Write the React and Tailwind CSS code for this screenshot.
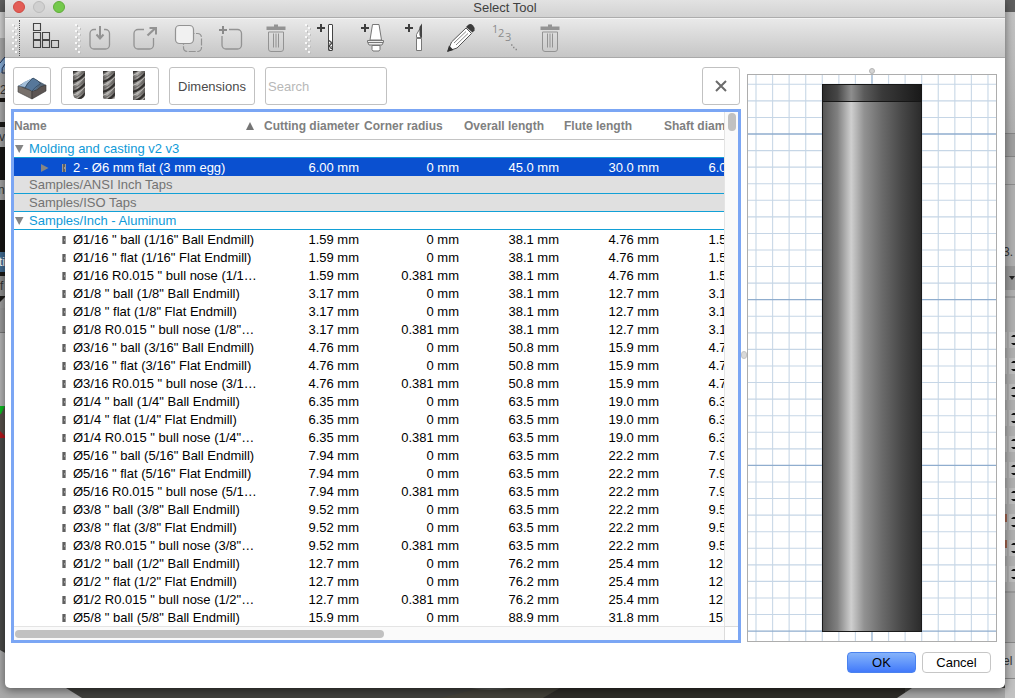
import React from 'react';

const columns = [
  'Cutting diameter',
  'Corner radius',
  'Overall length',
  'Flute length',
  'Shaft diameter',
];

const tools = [
  ['Ø1/16 " ball (1/16" Ball Endmill)', '1.59 mm', '0 mm', '38.1 mm', '4.76 mm', '1.59 mm'],
  ['Ø1/16 " flat (1/16" Flat Endmill)', '1.59 mm', '0 mm', '38.1 mm', '4.76 mm', '1.59 mm'],
  ['Ø1/16 R0.015 " bull nose (1/1…', '1.59 mm', '0.381 mm', '38.1 mm', '4.76 mm', '1.59 mm'],
  ['Ø1/8 " ball (1/8" Ball Endmill)', '3.17 mm', '0 mm', '38.1 mm', '12.7 mm', '3.17 mm'],
  ['Ø1/8 " flat (1/8" Flat Endmill)', '3.17 mm', '0 mm', '38.1 mm', '12.7 mm', '3.17 mm'],
  ['Ø1/8 R0.015 " bull nose (1/8"…', '3.17 mm', '0.381 mm', '38.1 mm', '12.7 mm', '3.17 mm'],
  ['Ø3/16 " ball (3/16" Ball Endmill)', '4.76 mm', '0 mm', '50.8 mm', '15.9 mm', '4.76 mm'],
  ['Ø3/16 " flat (3/16" Flat Endmill)', '4.76 mm', '0 mm', '50.8 mm', '15.9 mm', '4.76 mm'],
  ['Ø3/16 R0.015 " bull nose (3/1…', '4.76 mm', '0.381 mm', '50.8 mm', '15.9 mm', '4.76 mm'],
  ['Ø1/4 " ball (1/4" Ball Endmill)', '6.35 mm', '0 mm', '63.5 mm', '19.0 mm', '6.35 mm'],
  ['Ø1/4 " flat (1/4" Flat Endmill)', '6.35 mm', '0 mm', '63.5 mm', '19.0 mm', '6.35 mm'],
  ['Ø1/4 R0.015 " bull nose (1/4"…', '6.35 mm', '0.381 mm', '63.5 mm', '19.0 mm', '6.35 mm'],
  ['Ø5/16 " ball (5/16" Ball Endmill)', '7.94 mm', '0 mm', '63.5 mm', '22.2 mm', '7.94 mm'],
  ['Ø5/16 " flat (5/16" Flat Endmill)', '7.94 mm', '0 mm', '63.5 mm', '22.2 mm', '7.94 mm'],
  ['Ø5/16 R0.015 " bull nose (5/1…', '7.94 mm', '0.381 mm', '63.5 mm', '22.2 mm', '7.94 mm'],
  ['Ø3/8 " ball (3/8" Ball Endmill)', '9.52 mm', '0 mm', '63.5 mm', '22.2 mm', '9.52 mm'],
  ['Ø3/8 " flat (3/8" Flat Endmill)', '9.52 mm', '0 mm', '63.5 mm', '22.2 mm', '9.52 mm'],
  ['Ø3/8 R0.015 " bull nose (3/8"…', '9.52 mm', '0.381 mm', '63.5 mm', '22.2 mm', '9.52 mm'],
  ['Ø1/2 " ball (1/2" Ball Endmill)', '12.7 mm', '0 mm', '76.2 mm', '25.4 mm', '12.7 mm'],
  ['Ø1/2 " flat (1/2" Flat Endmill)', '12.7 mm', '0 mm', '76.2 mm', '25.4 mm', '12.7 mm'],
  ['Ø1/2 R0.015 " bull nose (1/2"…', '12.7 mm', '0.381 mm', '76.2 mm', '25.4 mm', '12.7 mm'],
  ['Ø5/8 " ball (5/8" Ball Endmill)', '15.9 mm', '0 mm', '88.9 mm', '31.8 mm', '15.9 mm'],
];

// Toolbar

const DragHandle = () => (
  <svg className="h-8 w-2 shrink-0" viewBox="0 0 8 32">
    {[2, 8, 14, 20, 26].map((y) => (
      <g key={y}>
        <rect x="1" y={y} width="2" height="2" fill="#f8f8f8" />
        <rect x="3" y={y + 1} width="1" height="2" fill="#c0c0c0" />
        <rect x="4" y={y + 3} width="2" height="2" fill="#f8f8f8" />
        <rect x="6" y={y + 4} width="1" height="2" fill="#c0c0c0" />
      </g>
    ))}
  </svg>
);

const ToolButton = ({ label, children }) => (
  <button type="button" aria-label={label} title={label} className="h-8 w-8 shrink-0">
    <svg className="h-8 w-8" viewBox="0 0 32 32" fill="none">
      {children}
    </svg>
  </button>
);

const Plus = ({ x, y, color }) => (
  <path d={`M${x - 4} ${y}h8M${x} ${y - 4}v8`} stroke={color} strokeWidth="2" />
);

const TrashShape = () => (
  <>
    <path d="M14 2.5h4v2h7.5V8h-19V4.5H14z" fill="#939393" />
    <path d="M8.5 10v17a2.500 2.500 0 0 0 2.500 2.500h10a2.500 2.500 0 0 0 2.500-2.500V10z" stroke="#939393" />
    <path d="M13.5 11.5v14M16 11.5v14M18.500 11.5v14" stroke="#939393" />
  </>
);

const Toolbar = () => (
  <div
    className="flex h-10 items-center border-t border-b border-t-[#f4f4f4] border-b-[#a9a9a9] bg-linear-to-b from-[#e9e9e9] to-[#c6c6c6] pl-1.5"
    role="toolbar"
  >
    <DragHandle />
    <div className="h-9 border-l border-dotted border-[#555]" />
    <div className="pl-2.5">
      <ToolButton label="Library view">
        <path
          d="M3.500 4.500h7v7h-7zM3.500 13.500h7v7h-7zM12.500 13.500h7v7h-7zM3.500 21.500h7v7h-7zM12.500 21.500h7v7h-7zM21.500 21.500h7v7h-7z"
          stroke="#444"
          strokeWidth="1.1"
        />
      </ToolButton>
    </div>
    <div className="flex items-center pl-3">
      <DragHandle />
      <div className="flex gap-3 pl-0.5">
        <ToolButton label="Import">
          <path d="M12 7.5h-2a4 4 0 0 0-4 4V23a4 4 0 0 0 4 4h11.500a4 4 0 0 0 4-4V11.500a4 4 0 0 0-4-4H20" stroke="#939393" strokeWidth="1.3" />
          <path d="M16 4v12" stroke="#939393" strokeWidth="2" />
          <path d="M12.500 12.500l3.500 4 3.500-4" stroke="#939393" strokeWidth="2" />
        </ToolButton>
        <ToolButton label="Export">
          <path d="M16 7.5h-6a4 4 0 0 0-4 4V23a4 4 0 0 0 4 4h11.500a4 4 0 0 0 4-4v-7" stroke="#939393" strokeWidth="1.3" />
          <path d="M19.500 13.500l8-7.500" stroke="#939393" strokeWidth="2.2" />
          <path d="M21.500 6H28v6.500" stroke="#939393" strokeWidth="2" />
        </ToolButton>
        <ToolButton label="Copy">
          <rect x="11.500" y="11.500" width="18" height="18" rx="4" stroke="#939393" strokeWidth="1.2" strokeDasharray="7 1.5" />
          <rect x="3.500" y="3.500" width="18" height="18" rx="4" fill="#f1f1f1" stroke="#939393" strokeWidth="1.2" />
        </ToolButton>
        <ToolButton label="New library">
          <path d="M13 7.5h8.500a4 4 0 0 1 4 4V23a4 4 0 0 1-4 4H10a4 4 0 0 1-4-4v-9" stroke="#939393" strokeWidth="1.3" />
          <Plus x={7} y={8} color="#8a8a8a" />
        </ToolButton>
        <ToolButton label="Delete library">
          <TrashShape />
        </ToolButton>
      </div>
    </div>
    <div className="flex items-center pl-3">
      <DragHandle />
      <div className="flex gap-3 pl-0.5">
        <ToolButton label="New mill">
          <Plus x={7} y={6} color="#3f3f3f" />
          <rect x="14.500" y="2.500" width="4" height="26" rx=".5" fill="#fff" stroke="#444" />
          <path d="M15 18.500l3 2.500-3 3 3 3" stroke="#444" strokeWidth="1.3" />
          <path d="M15 22.500l3-3M15 28l3-4" stroke="#777" />
        </ToolButton>
        <ToolButton label="New holder">
          <Plus x={7} y={6} color="#3f3f3f" />
          <path d="M14.500 2.500H21l2.500 15.500H12z" fill="#fff" stroke="#777" />
          <path d="M14 23.500h8v4L21 29h-6l-1-1.500z" fill="#fff" stroke="#777" />
          <path d="M9.500 18.500h16V20L24 23H11l-1.500-3z" fill="#ececec" stroke="#777" />
          <path d="M10 20.500h15" stroke="#777" />
        </ToolButton>
        <ToolButton label="New turning tool">
          <Plus x={7} y={6} color="#3f3f3f" />
          <path d="M14.500 16.500h5v12h-5z" fill="#fff" stroke="#777" />
          <path d="M14.500 15.500v-3l3.500-6 1.500 9z" fill="#fff" stroke="#777" />
          <path d="M17.500 13V5L20 1.500v14h-1.500z" fill="#444" />
        </ToolButton>
        <ToolButton label="Edit tool">
          <path d="M2 29l3.500-9L20 6l5.500 5.500L11 26z" fill="#fff" stroke="#555" />
          <path d="M1 30l2-6.500L7.500 28z" fill="#333" />
          <path d="M8 21L20 9.500M10 23l12-11.500" stroke="#888" />
          <path d="M22 3q2.500-2 5 .5t1.500 5l-2 2L20 5z" fill="#3c3c3c" />
        </ToolButton>
        <ToolButton label="Renumber">
          <g fill="#8b8b8b" className="font-['Open_Sans',sans-serif] text-[11px]">
            <text x="2" y="11">1</text>
            <text x="8" y="15">2</text>
            <text x="15" y="19">3</text>
          </g>
          <path d="M21 23h1.500M23 25.500h1.500M25.500 27.500H27" stroke="#8b8b8b" strokeWidth="1.5" />
        </ToolButton>
        <ToolButton label="Delete tool">
          <TrashShape />
        </ToolButton>
      </div>
    </div>
  </div>
);

// Filter row

const StockIcon = () => (
  <svg className="h-6 w-8" viewBox="0 0 32 24">
    <path d="M2 10l7-4 8-4 13 7-14 8z" fill="#56687a" />
    <path d="M2 10q3 0 6 2l8 3v8L2 16z" fill="#77706b" stroke="#3c3c3c" strokeWidth=".6" />
    <path d="M16 15l5-1q3-4 9-5v6l-14 8z" fill="#5c5553" stroke="#333" strokeWidth=".6" />
    <path d="M2 10q3 0 5-2.500L17 2q5 2 7 6-2 2-4 5-2 2-4 2-4-4-14-5z" fill="#56779a" />
    <path d="M2 10q4-1 6-4l9-4q-6 5-8 9-3-1-7-1z" fill="#a1bdd8" />
    <path d="M17 2q-6 5-8 10M17 2q5 2 8 6M16 15q3-4 8-7" stroke="#2f4356" strokeWidth=".7" fill="none" />
  </svg>
);

const tips = {
  ball: 'M1 0h12v22q0 6-6 6t-6-6z',
  bull: 'M1 0h12v26q0 2-2 2H3q-2 0-2-2z',
  flat: 'M1 0h12v29H1z',
};

const MillIcon = ({ tip }) => (
  <svg className="h-[30px] w-3.5" viewBox="0 0 14 30">
    <defs>
      <linearGradient id={`steel-${tip}`}>
        <stop offset="0" stopColor="#4a4846" />
        <stop offset=".4" stopColor="#a9a7a4" />
        <stop offset="1" stopColor="#55524f" />
      </linearGradient>
      <clipPath id={`tip-${tip}`}>
        <path d={tips[tip]} />
      </clipPath>
    </defs>
    <g clipPath={`url(#tip-${tip})`}>
      <rect width="14" height="30" fill={`url(#steel-${tip})`} />
      {[0, 10, 20, 30, 40].map((y) => (
        <g key={y}>
          <path d={`M0 ${y}q8-2 14-10v3q-6 8-14 9z`} fill="#33312f" />
          <path d={`M0 ${y + 4}q8-2 14-10v1q-6 8-14 10z`} fill="#c8c6c3" />
          <path d={`M0 ${y + 7}q8-2 14-10v1q-6 8-14 10z`} fill="#65625f" />
        </g>
      ))}
    </g>
  </svg>
);

const boxClass = 'flex h-[38px] items-center rounded-[3px] border border-[#c1c1c1] bg-white';

const FilterRow = () => (
  <div className="flex gap-2.5 pr-px pb-1 pl-0.5">
    <button type="button" aria-label="Operation type" className={`${boxClass} w-[38px] justify-center pt-1`}>
      <StockIcon />
    </button>
    <div role="group" aria-label="Tool type" className={`${boxClass} w-[98px] justify-between pr-3 pl-2.5`}>
      <button type="button" aria-label="Ball end mill"><MillIcon tip="ball" /></button>
      <button type="button" aria-label="Bull nose end mill"><MillIcon tip="bull" /></button>
      <button type="button" aria-label="Flat end mill"><MillIcon tip="flat" /></button>
    </div>
    <button type="button" className={`${boxClass} w-[86px] justify-center pt-px text-[13px] text-[#4a4a4a]`}>
      Dimensions
    </button>
    <input
      type="search"
      aria-label="Search"
      placeholder="Search"
      className={`${boxClass} w-[122px] px-0.5 text-[13px] placeholder:text-[#b8b8b8]`}
    />
    <button type="button" aria-label="Clear filters" className={`${boxClass} ml-auto w-[38px] justify-center`}>
      <svg className="h-3 w-3" viewBox="0 0 12 12" stroke="#6b6b6b" strokeWidth="2">
        <path d="M1 1l10 10M11 1L1 11" />
      </svg>
    </button>
  </div>
);

// Tool table

const Disclosure = ({ open }) => (
  <svg className="h-2 w-2.5" viewBox="0 0 10 8" fill="#858585">
    <path d={open ? 'M1 0h8.500L5.200 8z' : 'M1 0v8l7.500-4z'} />
  </svg>
);

const TinyMill = () => (
  <svg className="h-2 w-1" viewBox="0 0 4 8">
    <rect width="4" height="8" fill="#9a9a9a" />
    <path d="M1 0h2v3H2v2h1v3H1z" fill="#606060" />
  </svg>
);

const GroupRow = ({ name, open }) => (
  <tr className={open ? 'text-[#0f9ad8]' : 'bg-[#e0e0e0] text-[#737373]'}>
    <td colSpan={6} className="h-[18px] border-b border-[#12a0d6] p-0">
      <div className="flex h-[17px] items-center">
        <span className="flex w-[15px] shrink-0">{open && <Disclosure open />}</span>
        {name}
      </div>
    </td>
  </tr>
);

const ToolRow = ({ tool, selected }) => (
  <tr className={selected ? 'bg-[#0a50d0] leading-4 text-white' : 'leading-4 text-black'} aria-selected={selected}>
    <td className="h-[18px] p-0 pt-0.5">
      <div className="flex h-4 items-center">
        <span className="flex w-12 shrink-0 pl-[26px]">{selected && <Disclosure />}</span>
        <span className="flex w-[11px] shrink-0"><TinyMill /></span>
        {tool[0]}
      </div>
    </td>
    {tool.slice(1).map((value, i) => (
      <td key={i} className="h-[18px] p-0 pt-0.5 pr-1 text-right">{value}</td>
    ))}
  </tr>
);

const ToolTable = () => (
  <div className="border-3 border-[#7ba6f4] bg-white">
    <div className="flex">
      <div className="min-w-0 flex-1 overflow-hidden">
        <table className="w-[749px] table-fixed border-separate border-spacing-0 text-[13px] leading-[18px] whitespace-nowrap">
          <colgroup>
            <col className="w-[249px]" />
            {columns.map((name) => <col key={name} className="w-[100px]" />)}
          </colgroup>
          <thead>
            <tr className="text-left text-[12px] text-[#808080]">
              <th className="h-7 border-b border-[#c4c4c4] p-0">
                <div className="flex items-center justify-between pr-2">
                  Name
                  <svg className="h-2 w-2.5" viewBox="0 0 10 8" fill="#757575">
                    <path d="M5 0l4 8H1z" />
                  </svg>
                </div>
              </th>
              {columns.map((name) => (
                <th key={name} className="h-7 border-b border-[#c4c4c4] p-0 pl-px">{name}</th>
              ))}
            </tr>
          </thead>
          <tbody>
            <GroupRow name="Molding and casting v2 v3" open />
            <ToolRow
              selected
              tool={['2 - Ø6 mm flat (3 mm egg)', '6.00 mm', '0 mm', '45.0 mm', '30.0 mm', '6.00 mm']}
            />
            <GroupRow name="Samples/ANSI Inch Taps" />
            <GroupRow name="Samples/ISO Taps" />
            <GroupRow name="Samples/Inch - Aluminum" open />
            {tools.map((tool) => <ToolRow key={tool[0]} tool={tool} />)}
          </tbody>
        </table>
      </div>
      <div className="w-3.5 shrink-0 border-l border-[#e4e4e4] bg-[#fafafa] pt-px pl-[3px]">
        <div className="h-[18px] w-2 rounded-full bg-[#c1c1c1]" />
      </div>
    </div>
    <div className="flex h-3.5">
      <div className="flex-1 border-t border-[#e4e4e4] bg-[#fafafa] pt-[3px] pl-px">
        <div className="h-2 w-[52%] rounded-full bg-[#c1c1c1]" />
      </div>
      <div className="w-3.5 border-t border-l border-[#dcdcdc] bg-white" />
    </div>
  </div>
);

// Tool preview

const STEP = 16.57;

const ToolPreview = () => (
  <svg className="block w-full border border-[#adadad]" viewBox="0 0 248 566" role="img" aria-label="Tool preview">
    <defs>
      <linearGradient id="shaft">
        <stop offset="0" stopColor="#565656" />
        <stop offset=".15" stopColor="#808080" />
        <stop offset=".29" stopColor="#cfcfcf" />
        <stop offset=".42" stopColor="#929292" />
        <stop offset=".6" stopColor="#6b6b6b" />
        <stop offset=".8" stopColor="#484848" />
        <stop offset="1" stopColor="#2b2b2b" />
      </linearGradient>
      <linearGradient id="cap">
        <stop offset="0" stopColor="#2d2d2d" />
        <stop offset=".15" stopColor="#464646" />
        <stop offset=".29" stopColor="#8e8e8e" />
        <stop offset=".42" stopColor="#5b5b5b" />
        <stop offset=".6" stopColor="#3a3a3a" />
        <stop offset="1" stopColor="#191919" />
      </linearGradient>
    </defs>
    <rect width="248" height="566" fill="#fff" />
    {Array.from({ length: 15 }, (_, i) => (
      <path key={i} d={`M${8 + i * STEP} 0v566`} stroke={i === 7 ? '#a9c0d8' : '#ccdae8'} strokeWidth={i === 7 ? 1.6 : 1.2} />
    ))}
    {Array.from({ length: 34 }, (_, i) => (
      <path key={i} d={`M0 ${9.3 + i * STEP}h248`} stroke={i % 10 === 3 ? '#8fadce' : '#c6d6e6'} strokeWidth={i % 10 === 3 ? 1.3 : 1.1} />
    ))}
    <rect x="74.500" y="9.500" width="99" height="547" fill="url(#shaft)" stroke="#1a1a1a" />
    <rect x="74.500" y="9.500" width="99" height="17" fill="url(#cap)" stroke="#161616" />
  </svg>
);

// Application window behind the dialog

const Spinner = ({ mark }) => (
  <div className="flex h-[26px] items-center justify-between">
    <span className="h-4 w-0.5 bg-[#c6c6c6]">
      {mark && <span className="block h-2 w-0.5 bg-[#a5654f]" />}
    </span>
    <svg className="h-4 w-1.5" viewBox="0 0 6 16" fill="#111">
      <rect width="6" height="16" fill="#bebebe" />
      <path d="M2 5h4V3H4zM2 11h4v2H4z" />
    </svg>
  </div>
);

const Backdrop = () => (
  <div className="col-start-1 row-start-1 flex min-w-0 text-[12px] leading-5 text-[#333]" aria-hidden="true">
    <div className="flex min-w-0 flex-1 flex-col">
      <div className="flex w-[5px] flex-1 flex-col overflow-hidden bg-[#4b4b48]">
        <div className="h-3 bg-[#5f5f5f]" />
        <div className="h-[26px] bg-[#cfcfcf]" />
        <div className="h-[42px] bg-[#a8a8a8]">
          <svg className="h-10 w-[5px]" viewBox="0 0 5 40">
            <path d="M5 19q-5 3-5 8v8l5-4z" fill="#86acd6" />
            <path d="M5 19L0 25M5 26q-4 4-3 9h3" stroke="#1d2f55" fill="none" />
          </svg>
        </div>
        <div className="h-[18px] bg-[#a8a8a8]">2</div>
        <div className="h-1 bg-[#181614]" />
        <div className="h-5 bg-[#a9a9a9]" />
        <div className="h-[5px] bg-[#1c1a18]" />
        <div className="h-5 bg-[#a2a2a2] indent-[-1px]">v</div>
        <div className="h-[33px] bg-[#171513]" />
        <div className="h-5 bg-[#a2a2a2] indent-[-2px]">n</div>
        <div className="h-[52px] bg-[#171513]" />
        <div className="h-5 bg-[#426c92] indent-[-1px] text-white">ti</div>
        <div className="h-1 bg-[#1c1a18]" />
        <div className="h-5 bg-[#8f8f8f]">f</div>
        <svg className="h-3 w-[5px]" viewBox="0 0 5 12">
          <rect width="5" height="12" fill="#a0a0a0" />
          <path d="M0 0h5v1L0 6z" fill="#1c1a18" />
        </svg>
        <div className="h-6 bg-[#9a9a9a]" />
        <div className="h-[74px] border-t border-[#777] bg-[#b4b4b4]" />
        <svg className="h-8 w-[5px]" viewBox="0 0 5 32">
          <rect width="5" height="32" fill="#57504a" />
          <path d="M0 0h5L1 8H0z" fill="#0bbd1f" />
          <path d="M0 25l5 5v2H0z" fill="#b3161b" />
        </svg>
      </div>
      <svg className="block h-12 w-full" viewBox="0 0 1005 48" preserveAspectRatio="none">
        <rect width="1005" height="48" fill="#3f3f3c" />
        <path d="M440 48l40-10h80l-17 10z" fill="#434139" />
        <path d="M560 38h345v10H543z" fill="#2e2c29" />
        <path d="M471 38h38q-19 4-38 0z" fill="#575856" />
        <path d="M0 0l66 38 16 10H0z" fill="#a9a9a9" />
        <path d="M912 38h93v10H897z" fill="#a6a6a6" />
      </svg>
    </div>
    <div className="flex w-2.5 flex-col overflow-hidden bg-[#b0b0b0]">
      <div className="h-3 bg-[#5f5f5f]" />
      <div className="h-[121px] bg-linear-to-b from-[#c4c4c4] to-[#b0b0b0]" />
      <div className="h-6 border-t border-b border-[#868686] bg-[#a0a0a0]" />
      <div className="h-7 border-b border-[#8e8e8e] bg-[#b0b0b0]" />
      <div className="h-[81px] bg-[#b0b0b0] pt-[57px] indent-[-2px]">3.</div>
      <div className="flex h-6 items-center bg-[#9a9a9a] pl-1">
        <svg className="h-1 w-1.5" viewBox="0 0 6 4" fill="#222"><path d="M0 0h6L3 4z" /></svg>
      </div>
      <div className="h-[37px]">
        <div className="h-2 border-b-2 border-[#999]" />
      </div>
      {Array.from({ length: 10 }, (_, i) => <Spinner key={i} mark={i === 7 || i === 8} />)}
      <div className="h-1.5 border-b-2 border-[#999]" />
      <div className="h-[50px] border-b border-[#888] bg-[#acacac]" />
      <div className="flex h-9 items-center border-b border-[#888] bg-[#bcbcbc] indent-[-2px]">el</div>
      <div className="flex-1 bg-[#c2c2c2]" />
    </div>
  </div>
);

const App = () => (
  <div className="grid min-h-screen grid-cols-1 overflow-hidden font-['Liberation_Sans',Arial,sans-serif]">
    <Backdrop />
    <div
      role="dialog"
      aria-labelledby="dialog-title"
      className="z-10 col-start-1 row-start-1 mr-2.5 mb-2.5 ml-[5px] flex min-w-0 flex-col self-start rounded-b-[5px] bg-white shadow-[0_2px_10px_rgba(0,0,0,0.5)]"
    >
      <header className="flex h-[18px] border-b border-[#adadad] bg-linear-to-b from-[#e2e2e2] to-[#d2d2d2] pl-2">
        <div className="flex flex-1 gap-2 pt-px">
          <button type="button" aria-label="Close" className="h-3 w-3 rounded-full border border-[#cf4a43] bg-[#e35d56]" />
          <button type="button" aria-label="Minimize" disabled className="h-3 w-3 rounded-full border border-[#bcbcbc] bg-[#d0d0d0]" />
          <button type="button" aria-label="Zoom" className="h-3 w-3 rounded-full border border-[#60ac3a] bg-[#74c94c]" />
        </div>
        <h1 id="dialog-title" className="text-[13px] leading-[15px] text-[#404040]">Select Tool</h1>
        <div className="flex-1 pr-2" />
      </header>

      <Toolbar />

      <main className="flex pt-[9px] pr-2 pl-1.5">
        <div className="min-w-0 flex-1">
          <FilterRow />
          <ToolTable />
        </div>
        <div className="flex w-1.5 items-center overflow-hidden">
          <div className="h-2 w-1.5 rounded-full border border-[#c4c4c4] bg-[#d9d9d9]" />
        </div>
        <div className="w-[250px] shrink-0">
          <div className="flex h-[7px] items-end justify-center">
            <div className="h-1.5 w-1.5 rounded-full border border-[#b5b5b5] bg-[#d4d4d4]" />
          </div>
          <ToolPreview />
        </div>
      </main>

      <footer className="flex justify-end gap-1.5 pt-[9px] pr-3.5 pb-[15px] text-[13px] leading-[19px] text-black">
        <button type="button" className="w-[69px] rounded-[4px] border border-[#4a82ee] bg-linear-to-b from-[#86b3fa] to-[#4279fa]">
          OK
        </button>
        <button type="button" className="w-[69px] rounded-[4px] border border-[#c6c6c6] bg-white">
          Cancel
        </button>
      </footer>
    </div>
  </div>
);

export default App;
